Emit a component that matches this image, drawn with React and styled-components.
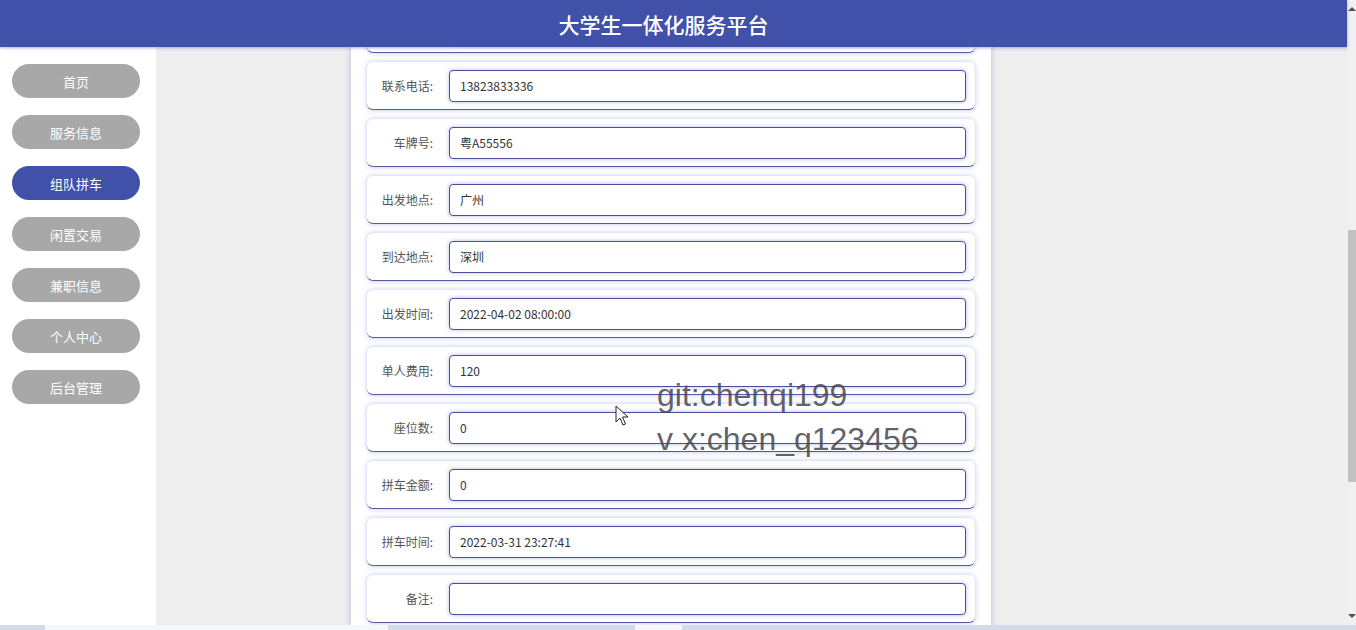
import React from "react";
import styled, { createGlobalStyle } from "styled-components";

const GlobalStyle = createGlobalStyle`
  html, body {
    margin: 0;
    padding: 0;
    overflow: hidden;
    font-family: "Microsoft YaHei", "Noto Sans CJK SC", "Liberation Sans", sans-serif;
  }
`;

const menus = ["首页", "服务信息", "组队拼车", "闲置交易", "兼职信息", "个人中心", "后台管理"];

const fields = [
  { label: "车辆信息:", value: "" },
  { label: "联系电话:", value: "13823833336" },
  { label: "车牌号:", value: "粤A55556" },
  { label: "出发地点:", value: "广州" },
  { label: "到达地点:", value: "深圳" },
  { label: "出发时间:", value: "2022-04-02 08:00:00" },
  { label: "单人费用:", value: "120" },
  { label: "座位数:", value: "0" },
  { label: "拼车金额:", value: "0" },
  { label: "拼车时间:", value: "2022-03-31 23:27:41" },
  { label: "备注:", value: "" },
];

export default function App() {
  return (
    <>
      <GlobalStyle />
      <Screen>
        <Page>
          <Header>大学生一体化服务平台</Header>
          <Sidebar>
            {menus.map((m) => (
              <MenuButton key={m} active={m === "组队拼车"}>
                {m}
              </MenuButton>
            ))}
          </Sidebar>
          <Main>
            <FormPanel>
              {fields.map((f) => (
                <FieldCard key={f.label}>
                  <Label>{f.label}</Label>
                  <Input value={f.value} readOnly />
                </FieldCard>
              ))}
            </FormPanel>
            <Watermark>
              <div>git:chenqi199</div>
              <div>v x:chen_q123456</div>
            </Watermark>
            <Cursor width="14" height="22" viewBox="0 0 14 22">
              <path
                d="M1 1 L1 17 L5 13 L8 20 L10.5 19 L7.5 12 L13 12 Z"
                fill="#fff"
                stroke="#222"
                strokeWidth="1"
                strokeLinejoin="round"
              />
            </Cursor>
          </Main>
          <Scrollbar>
            <ArrowUp />
            <Track>
              <Thumb />
            </Track>
            <ArrowDown />
          </Scrollbar>
        </Page>
        <Taskbar>
          <TaskSeg w="45px" />
          <TaskSeg w="343px" light />
          <TaskSeg w="247px" />
          <TaskSeg w="47px" light />
          <TaskSeg w="674px" />
        </Taskbar>
      </Screen>
    </>
  );
}

const Screen = styled.div`
  width: 1356px;
  height: 630px;
  display: flex;
  flex-direction: column;
  overflow: hidden;
`;

const Page = styled.div`
  position: relative;
  flex: 1;
  display: flex;
  min-height: 0;
`;

const Header = styled.div`
  position: absolute;
  top: 0;
  left: 0;
  right: 9px;
  height: 47px;
  z-index: 5;
  box-sizing: border-box;
  padding-right: 20px;
  background: #4150a8;
  color: #fff;
  display: flex;
  align-items: center;
  justify-content: center;
  font-size: 21px;
  font-weight: 500;
  box-shadow: 0 1px 3px rgba(63, 80, 169, 0.45);
`;

const Sidebar = styled.div`
  width: 156px;
  flex-shrink: 0;
  box-sizing: border-box;
  background: #fff;
  padding: 64px 0 0 12px;
  display: flex;
  flex-direction: column;
  align-items: flex-start;
  gap: 17px;
`;

const MenuButton = styled.div`
  width: 128px;
  height: 34px;
  border-radius: 17px;
  background: ${(p) => (p.active ? "#4150a8" : "#a8a8a8")};
  color: #fff;
  font-size: 13px;
  display: flex;
  align-items: center;
  justify-content: center;
`;

const Main = styled.div`
  position: relative;
  flex: 1;
  background: #eeeeee;
  overflow: hidden;
`;

const FormPanel = styled.div`
  width: 608px;
  margin-left: 195px;
  padding: 5px 16px 20px;
  background: #fff;
  box-shadow: 0 0 6px rgba(120, 125, 200, 0.45);
  display: flex;
  flex-direction: column;
  gap: 9px;
`;

const FieldCard = styled.div`
  height: 48px;
  box-sizing: border-box;
  border-radius: 6px;
  background: #fff;
  border-bottom: 1px solid #555a9e;
  box-shadow: 0 0 5px rgba(90, 100, 200, 0.4);
  display: flex;
  align-items: center;
`;

const Label = styled.div`
  width: 66px;
  padding-right: 16px;
  text-align: right;
  font-size: 12px;
  color: #555;
`;

const Input = styled.input`
  width: 517px;
  height: 32px;
  box-sizing: border-box;
  border: 1px solid #4b4f99;
  border-radius: 4px;
  padding: 0 10px;
  font-family: "Microsoft YaHei", "Noto Sans CJK SC", "Liberation Sans", sans-serif;
  font-size: 12px;
  color: #333;
  outline: none;
  box-shadow: 0 0 4px rgba(90, 100, 200, 0.45);
`;

const Watermark = styled.div`
  position: absolute;
  left: 501px;
  top: 373px;
  font-family: "Liberation Sans", Arial, sans-serif;
  font-size: 32px;
  line-height: 44px;
  color: rgba(70, 70, 80, 0.85);
  pointer-events: none;
`;

const Cursor = styled.svg`
  position: absolute;
  left: 459px;
  top: 405px;
`;

const Scrollbar = styled.div`
  width: 9px;
  flex-shrink: 0;
  background: #f1f1f1;
  display: flex;
  flex-direction: column;
  align-items: center;
`;

const ArrowUp = styled.div`
  margin-top: 7px;
  width: 0;
  height: 0;
  border-left: 4px solid transparent;
  border-right: 4px solid transparent;
  border-bottom: 4px solid #505050;
`;

const ArrowDown = styled.div`
  margin-bottom: 7px;
  width: 0;
  height: 0;
  border-left: 4px solid transparent;
  border-right: 4px solid transparent;
  border-top: 4px solid #505050;
`;

const Track = styled.div`
  flex: 1;
  width: 100%;
  padding-top: 219px;
`;

const Thumb = styled.div`
  width: 8px;
  margin-left: 1px;
  height: 252px;
  background: #c1c1c1;
`;

const Taskbar = styled.div`
  height: 5px;
  display: flex;
  background: #d3dbea;
`;

const TaskSeg = styled.div`
  width: ${(p) => p.w};
  background: ${(p) => (p.light ? "#f6f7fb" : "#d3dbea")};
`;
